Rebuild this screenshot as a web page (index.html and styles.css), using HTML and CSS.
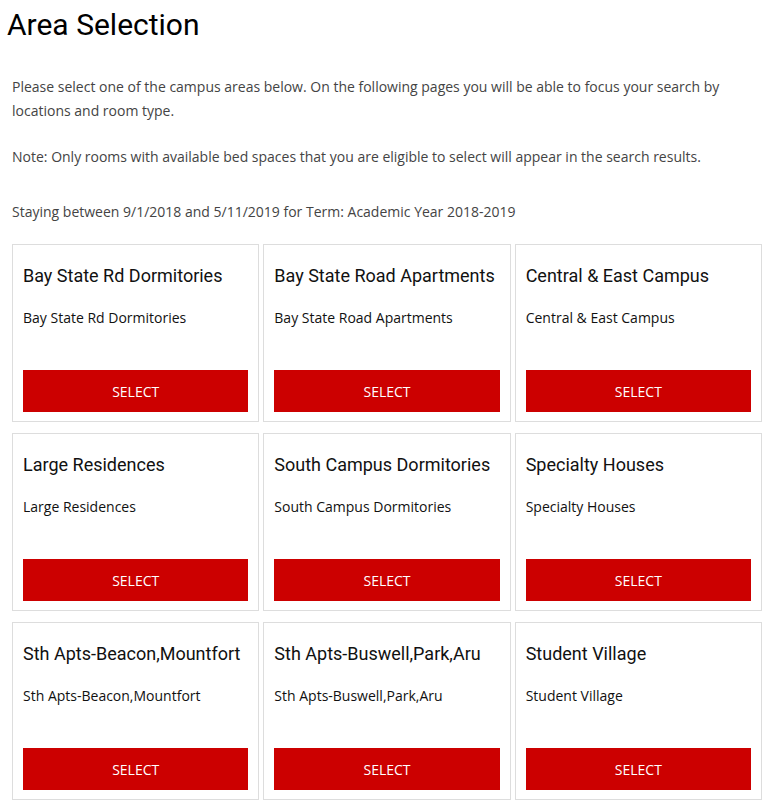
FILE: index.html
```html
<!DOCTYPE html>
<html lang="en">
<head>
    <meta charset="UTF-8">
    <meta name="viewport" content="width=device-width, initial-scale=1.0">
    <title>Area Selection</title>
    <link rel="stylesheet" href="styles.css">
</head>
<body>
    <h1 class="page-title">Area Selection</h1>
    <main class="area-page">
        <p class="intro">Please select one of the campus areas below. On the following pages you will be able to focus your search by locations and room type.</p>
        <p class="note">Note: Only rooms with available bed spaces that you are eligible to select will appear in the search results.</p>
        <p class="stay">Staying between 9/1/2018 and 5/11/2019 for Term: Academic Year 2018-2019</p>

        <div class="area-grid">
            <div class="area-card">
                <h3>Bay State Rd Dormitories</h3>
                <p>Bay State Rd Dormitories</p>
                <button class="select-btn">SELECT</button>
            </div>
            <div class="area-card">
                <h3>Bay State Road Apartments</h3>
                <p>Bay State Road Apartments</p>
                <button class="select-btn">SELECT</button>
            </div>
            <div class="area-card">
                <h3>Central &amp; East Campus</h3>
                <p>Central &amp; East Campus</p>
                <button class="select-btn">SELECT</button>
            </div>
            <div class="area-card">
                <h3>Large Residences</h3>
                <p>Large Residences</p>
                <button class="select-btn">SELECT</button>
            </div>
            <div class="area-card">
                <h3>South Campus Dormitories</h3>
                <p>South Campus Dormitories</p>
                <button class="select-btn">SELECT</button>
            </div>
            <div class="area-card">
                <h3>Specialty Houses</h3>
                <p>Specialty Houses</p>
                <button class="select-btn">SELECT</button>
            </div>
            <div class="area-card">
                <h3>Sth Apts-Beacon,Mountfort</h3>
                <p>Sth Apts-Beacon,Mountfort</p>
                <button class="select-btn">SELECT</button>
            </div>
            <div class="area-card">
                <h3>Sth Apts-Buswell,Park,Aru</h3>
                <p>Sth Apts-Buswell,Park,Aru</p>
                <button class="select-btn">SELECT</button>
            </div>
            <div class="area-card">
                <h3>Student Village</h3>
                <p>Student Village</p>
                <button class="select-btn">SELECT</button>
            </div>
        </div>
    </main>
</body>
</html>
```

FILE: styles.css
```css
body {
    margin: 0;
    background-color: #ffffff;
    font-family: 'Open Sans', 'Liberation Sans', sans-serif;
    font-size: 14px;
    color: #444444;
}

.page-title {
    font-family: Roboto, 'Liberation Sans', sans-serif;
    font-weight: 400;
    font-size: 30px;
    line-height: 36px;
    color: #000000;
    margin: 7px 0 0 7px;
}

.area-page {
    padding: 0 16px 0 12px;
}

.area-page p {
    line-height: 24px;
    margin: 0;
}

.intro {
    padding-top: 32px;
}

.note {
    margin-top: 22px !important;
}

.stay {
    margin-top: 31px !important;
}

.area-grid {
    display: grid;
    grid-template-columns: repeat(3, 1fr);
    column-gap: 4px;
    row-gap: 11px;
    margin-top: 20px;
}

.area-card {
    border: 1px solid #dddddd;
    padding: 10px 10px 9px 10px;
    display: flex;
    flex-direction: column;
    height: 157px;
}

.area-card h3 {
    font-family: Roboto, 'Liberation Sans', sans-serif;
    font-weight: 400;
    font-size: 18px;
    line-height: 22px;
    color: #111111;
    margin: 10px 0 0 0;
}

.area-card p {
    color: #111111;
    margin-top: 19px !important;
}

.select-btn {
    margin-top: auto;
    height: 42px;
    width: 100%;
    border: none;
    background-color: #cc0000;
    color: #ffffff;
    font-family: 'Open Sans', 'Liberation Sans', sans-serif;
    font-size: 14px;
    cursor: pointer;
}
```
